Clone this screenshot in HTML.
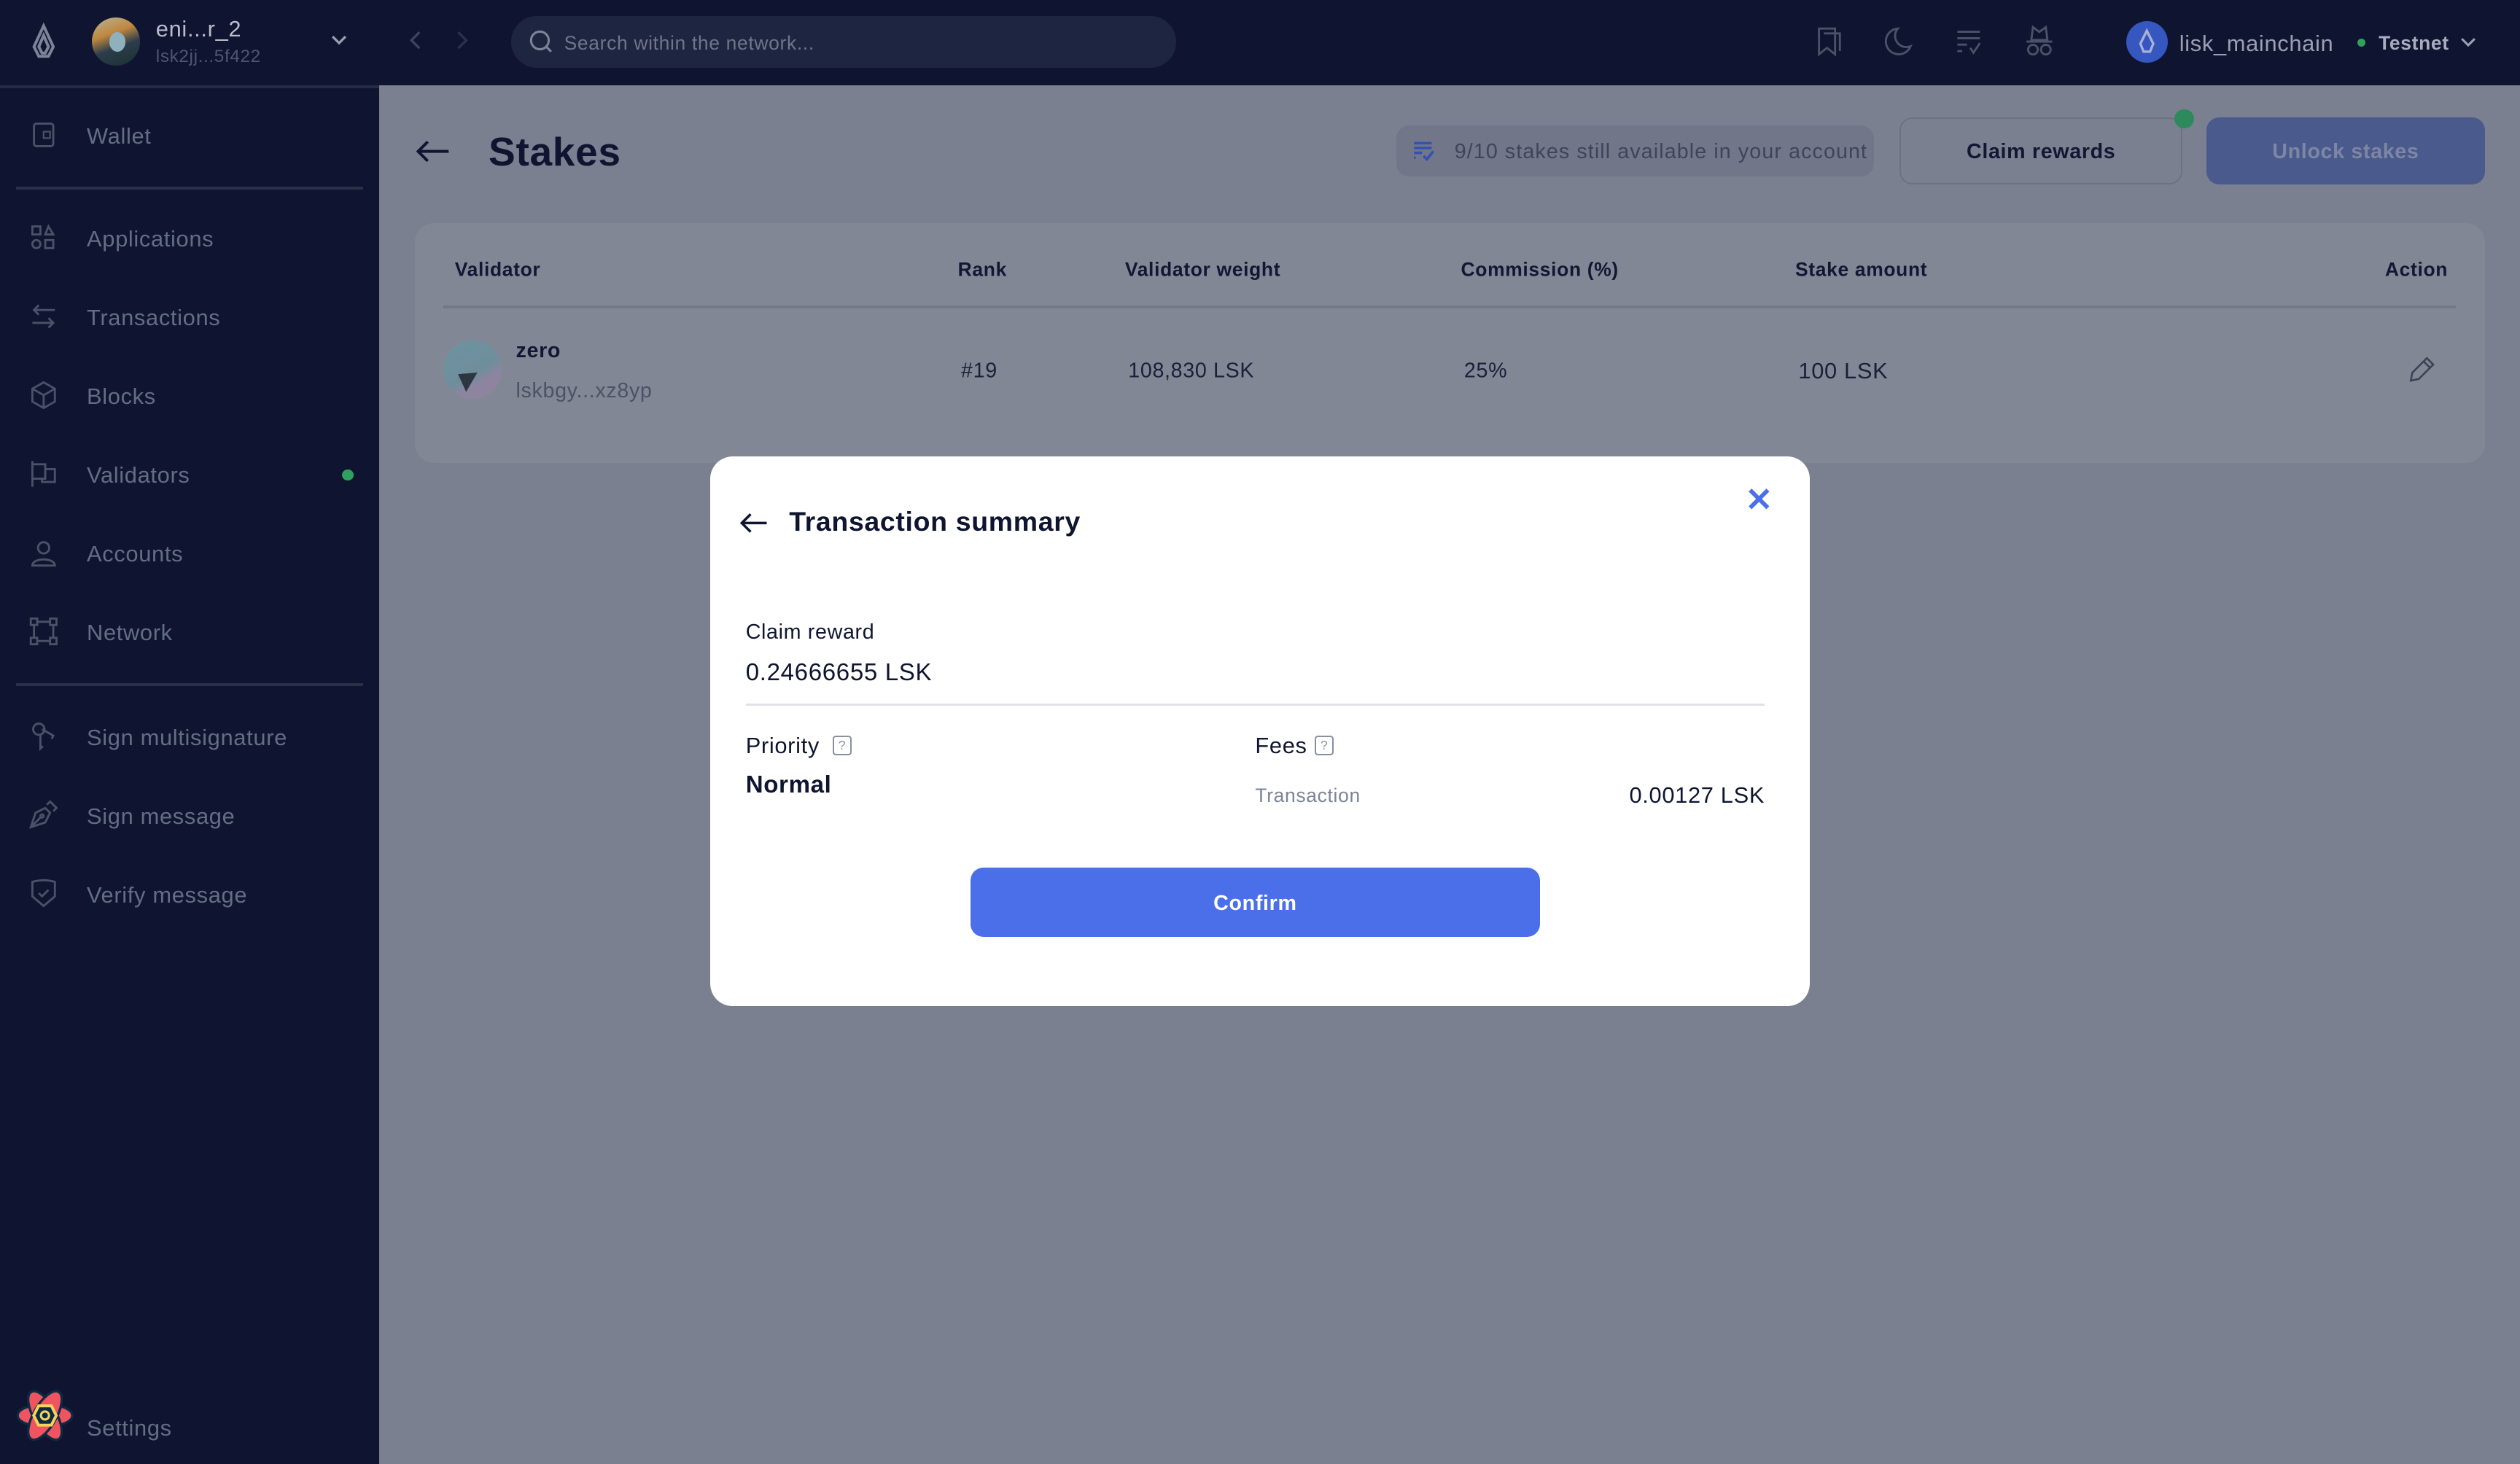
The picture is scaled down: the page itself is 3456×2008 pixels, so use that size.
<!DOCTYPE html>
<html><head><meta charset="utf-8"><style>
html{zoom:2.2041}
*{box-sizing:border-box;margin:0;padding:0}
body{width:1568px;height:911px;overflow:hidden;position:relative;background:#7a808f;font-family:"Liberation Sans",sans-serif;letter-spacing:0.3px}
.a{position:absolute}
.t{margin-top:1px}
.side{left:0;top:0;width:236px;height:911px;background:#0f1530}
.top{left:236px;top:0;width:1332px;height:53px;background:#0f1530}
.nav{position:absolute;left:54px;font-size:14px;color:#646d86;transform:translateY(-50%);white-space:nowrap;margin-top:1px}
.ic{position:absolute;left:18px;width:18px;height:18px;transform:translateY(-50%)}
.hr{position:absolute;left:10px;width:216px;height:2px;background:#2a3045}
.th{position:absolute;top:168px;transform:translateY(-50%);font-size:12px;font-weight:bold;color:#121833}
.td{position:absolute;top:231px;transform:translateY(-50%);font-size:13px;color:#1a2038}
svg{overflow:visible}
</style></head><body>
<div class="a side"></div>
<div class="a" style="left:236px;top:0;width:1px;height:53px;background:#252b44"></div>
<div class="a" style="left:0;top:53px;width:236px;height:2px;background:#252b44"></div>
<div class="a top"></div>
<svg class="a" style="left:18px;top:14px" width="18" height="24" viewBox="0 0 18 24"><path d="M9 2 L3 15 L6 21 H12 L15 15 Z M9 8 L6 15 L8 19 H10 L12 15 Z" fill="none" stroke="#7d8398" stroke-width="1.8"/></svg>
<div class="a" style="left:57px;top:11px;width:30px;height:30px;border-radius:50%;background:linear-gradient(160deg,#b8b49a 0%,#c0873e 35%,#2b3d4b 60%,#1d3030 100%)"></div>
<div class="a" style="left:68px;top:20px;width:10px;height:12px;border-radius:50%;background:#8fb0bd"></div>
<div class="a t" style="left:97px;top:9px;font-size:14px;color:#b9bdcb">eni...r_2</div>
<div class="a t" style="left:97px;top:28px;font-size:11px;color:#4e5670">lsk2jj...5f422</div>
<svg class="a" style="left:206px;top:22px" width="10" height="7"><path d="M1 1 L5 5 L9 1" fill="none" stroke="#9aa0b2" stroke-width="1.5"/></svg>
<svg class="ic" style="top:84px" viewBox="0 0 18 18"><rect x="3" y="2" width="12" height="14" rx="1.5" fill="none" stroke="#4a5168" stroke-width="1.3"/><rect x="9" y="7" width="4" height="4" fill="none" stroke="#4a5168"/></svg>
<div class="nav" style="top:84px">Wallet</div>
<div class="hr" style="top:116px"></div>
<svg class="ic" style="top:148px" viewBox="0 0 18 18"><g fill="none" stroke="#4a5168" stroke-width="1.3"><rect x="2" y="2" width="5" height="5"/><path d="M12 2 L15 7 H10 Z"/><circle cx="4.5" cy="13" r="2.5"/><rect x="10" y="10.5" width="5" height="5"/></g></svg>
<div class="nav" style="top:148px">Applications</div>
<svg class="ic" style="top:197px" viewBox="0 0 18 18"><g fill="none" stroke="#4a5168" stroke-width="1.3"><path d="M16 5 H3 M6 2 L3 5 L6 8 M2 13 H15 M12 10 L15 13 L12 16"/></g></svg>
<div class="nav" style="top:197px">Transactions</div>
<svg class="ic" style="top:246px" viewBox="0 0 18 18"><g fill="none" stroke="#4a5168" stroke-width="1.3"><path d="M9 1 L16 5 V13 L9 17 L2 13 V5 Z M2 5 L9 9 L16 5 M9 9 V17"/></g></svg>
<div class="nav" style="top:246px">Blocks</div>
<svg class="ic" style="top:295px" viewBox="0 0 18 18"><g fill="none" stroke="#4a5168" stroke-width="1.3"><path d="M2 1 V17 M2 3 H10 V12 H2 M10 6 H16 V14 H8 V12"/></g></svg>
<div class="nav" style="top:295px">Validators</div>
<div class="a" style="left:213px;top:292px;width:7px;height:7px;border-radius:50%;background:#2fa05e"></div>
<svg class="ic" style="top:344px" viewBox="0 0 18 18"><g fill="none" stroke="#4a5168" stroke-width="1.3"><circle cx="9" cy="6" r="3.5"/><path d="M2 17 C2 12 16 12 16 17 Z"/></g></svg>
<div class="nav" style="top:344px">Accounts</div>
<svg class="ic" style="top:393px" viewBox="0 0 18 18"><g fill="none" stroke="#4a5168" stroke-width="1.3"><rect x="1" y="1" width="4" height="4"/><rect x="13" y="1" width="4" height="4"/><rect x="1" y="13" width="4" height="4"/><rect x="13" y="13" width="4" height="4"/><path d="M5 3 H13 M3 5 V13 M15 5 V13 M5 15 H13"/></g></svg>
<div class="nav" style="top:393px">Network</div>
<div class="hr" style="top:425px"></div>
<svg class="ic" style="top:458px" viewBox="0 0 18 18"><g fill="none" stroke="#4a5168" stroke-width="1.3"><circle cx="6" cy="5" r="3.5"/><path d="M7 8 V17 L8.5 15.5 M8 5 L15 9 L14 11"/></g></svg>
<div class="nav" style="top:458px">Sign multisignature</div>
<svg class="ic" style="top:507px" viewBox="0 0 18 18"><g fill="none" stroke="#4a5168" stroke-width="1.3"><path d="M1 17 L4 8 L10 5 L13 8 L10 14 Z M11 3 L13 1 L17 5 L15 7 M1 17 L7 11"/><circle cx="8" cy="10" r="1"/></g></svg>
<div class="nav" style="top:507px">Sign message</div>
<svg class="ic" style="top:556px" viewBox="0 0 18 18"><g fill="none" stroke="#4a5168" stroke-width="1.3"><path d="M2 2 Q9 0 16 2 V11 L9 17 L2 11 Z M6 9 L8 11 L12 7"/></g></svg>
<div class="nav" style="top:556px">Verify message</div>
<svg class="a" style="left:10px;top:864px" width="36" height="34" viewBox="0 0 36 34"><g stroke="#0c2a45" stroke-width="1.5" fill="#ef5461"><ellipse cx="18" cy="17" rx="17" ry="7"/><ellipse cx="18" cy="17" rx="17" ry="7" transform="rotate(60 18 17)"/><ellipse cx="18" cy="17" rx="17" ry="7" transform="rotate(-60 18 17)"/></g><path d="M14 11 H22 L25 17 L22 23 H14 L11 17 Z" fill="#0c2a45" stroke="#f3d35a" stroke-width="1.8"/><circle cx="18" cy="17" r="2.5" fill="none" stroke="#f3d35a" stroke-width="1.4"/></svg>
<div class="nav" style="top:888px">Settings</div>
<svg class="a" style="left:255px;top:19px" width="8" height="12"><path d="M6 1 L1 6 L6 11" fill="none" stroke="#3d4460" stroke-width="1.5"/></svg>
<svg class="a" style="left:283px;top:19px" width="8" height="12"><path d="M2 1 L7 6 L2 11" fill="none" stroke="#2c324a" stroke-width="1.5"/></svg>
<div class="a" style="left:318px;top:10px;width:414px;height:32px;border-radius:16px;background:#1e2540"></div>
<svg class="a" style="left:329px;top:18px" width="16" height="16"><circle cx="7" cy="7" r="5.5" fill="none" stroke="#7d8398" stroke-width="1.4"/><path d="M11 11 L14 14" stroke="#7d8398" stroke-width="1.4"/></svg>
<div class="a t" style="left:351px;top:19px;font-size:12px;color:#6e758c">Search within the network...</div>
<svg class="a" style="left:1129px;top:17px" width="18" height="18" viewBox="0 0 18 18"><path d="M3 1 H13 V17 L8 13 L3 17 Z M6 4 H16 V15" fill="none" stroke="#4a5168" stroke-width="1.3"/></svg>
<svg class="a" style="left:1173px;top:17px" width="18" height="18" viewBox="0 0 18 18"><path d="M8 1 A8 8 0 1 0 16 12 A7 7 0 0 1 8 1 Z" fill="none" stroke="#4a5168" stroke-width="1.3"/></svg>
<svg class="a" style="left:1216px;top:17px" width="18" height="18" viewBox="0 0 18 18"><path d="M2 3 H16 M2 7 H16 M2 11 H8 M2 15 H5 M10 13 L12 16 L16 10" fill="none" stroke="#4a5168" stroke-width="1.3"/></svg>
<svg class="a" style="left:1260px;top:16px" width="18" height="20" viewBox="0 0 18 20"><path d="M5 1 L9 4 L13 1 L14 9 H4 Z M1 10 H17" fill="none" stroke="#4a5168" stroke-width="1.3"/><circle cx="5" cy="15" r="3" fill="none" stroke="#4a5168" stroke-width="1.3"/><circle cx="13" cy="15" r="3" fill="none" stroke="#4a5168" stroke-width="1.3"/></svg>
<div class="a" style="left:1323px;top:13px;width:26px;height:26px;border-radius:50%;background:#3656c0"></div>
<svg class="a" style="left:1330px;top:18px" width="12" height="16" viewBox="0 0 12 16"><path d="M6 1 L2 9 L4 14 H8 L10 9 Z" fill="none" stroke="#a8b3d8" stroke-width="1.5"/></svg>
<div class="a t" style="left:1356px;top:18px;font-size:14px;color:#9aa0b2">lisk_mainchain</div>
<div class="a" style="left:1467px;top:24px;width:5px;height:5px;border-radius:50%;background:#2fa05e"></div>
<div class="a t" style="left:1480px;top:19px;font-size:12px;font-weight:bold;color:#a8adbd">Testnet</div>
<svg class="a" style="left:1531px;top:23px" width="10" height="7"><path d="M1 1 L5 5 L9 1" fill="none" stroke="#9aa0b2" stroke-width="1.4"/></svg>
<svg class="a" style="left:258px;top:86px" width="22" height="16"><path d="M21 8 H2 M8 2 L2 8 L8 14" fill="none" stroke="#0f1530" stroke-width="1.8"/></svg>
<div class="a t" style="left:304px;top:79px;font-size:25px;font-weight:bold;color:#0f1530">Stakes</div>
<div class="a" style="left:869px;top:78px;width:297px;height:32px;border-radius:8px;background:#717789"></div>
<svg class="a" style="left:879px;top:87px" width="14" height="14"><path d="M1 2 H12 M1 5 H12 M1 8 H6 M1 11 H2 M7 10 L9 12 L13 7" fill="none" stroke="#3450b0" stroke-width="1.6"/></svg>
<div class="a t" style="left:905px;top:86px;font-size:13px;color:#3e4459;letter-spacing:0.5px">9/10 stakes still available in your account</div>
<div class="a" style="left:1182px;top:73px;width:176px;height:42px;border-radius:8px;border:1px solid #6c7282"></div>
<div class="a t" style="left:1182px;top:86px;width:176px;text-align:center;font-size:13px;font-weight:bold;color:#121833">Claim rewards</div>
<div class="a" style="left:1353px;top:68px;width:12px;height:12px;border-radius:50%;background:#2e8a5a"></div>
<div class="a" style="left:1373px;top:73px;width:173px;height:42px;border-radius:8px;background:#4a5a8c"></div>
<div class="a t" style="left:1373px;top:86px;width:173px;text-align:center;font-size:13px;font-weight:bold;color:#7d86a4">Unlock stakes</div>
<div class="a" style="left:258px;top:139px;width:1288px;height:149px;border-radius:12px;background:#828795"></div>
<div class="th" style="left:283px">Validator</div>
<div class="th" style="left:596px">Rank</div>
<div class="th" style="left:700px">Validator weight</div>
<div class="th" style="left:909px">Commission (%)</div>
<div class="th" style="left:1117px">Stake amount</div>
<div class="th" style="left:1484px">Action</div>
<div class="a" style="left:276px;top:190px;width:1252px;height:2px;background:#737888"></div>
<div class="a" style="left:276px;top:212px;width:36px;height:36px;border-radius:50%;background:linear-gradient(150deg,#6e93a0 0%,#6f8e9c 55%,#8e84a0 70%)"></div>
<svg class="a" style="left:284px;top:232px" width="16" height="14"><path d="M1 1 L13 0 L6 12 Z" fill="#2c3540"/></svg>
<div class="a t" style="left:321px;top:210px;font-size:13px;font-weight:bold;color:#121833">zero</div>
<div class="a t" style="left:321px;top:235px;font-size:13px;color:#4c5266">lskbgy...xz8yp</div>
<div class="td" style="left:598px">#19</div>
<div class="td" style="left:702px">108,830 LSK</div>
<div class="td" style="left:911px">25%</div>
<div class="td" style="left:1119px;font-size:14px">100 LSK</div>
<svg class="a" style="left:1499px;top:222px" width="16" height="16" viewBox="0 0 16 16"><path d="M1 15 L2 10 L11 1 L15 5 L6 14 Z M9 3 L13 7" fill="none" stroke="#3d4356" stroke-width="1.2"/></svg>
<div class="a" style="left:442px;top:284px;width:684px;height:342px;border-radius:14px;background:#fff"></div>
<svg class="a" style="left:460px;top:319px" width="18" height="13"><path d="M17 6.5 H2 M7 1 L1.5 6.5 L7 12" fill="none" stroke="#0f1530" stroke-width="1.6"/></svg>
<div class="a t" style="left:491px;top:314px;font-size:17px;font-weight:bold;color:#0f1530">Transaction summary</div>
<svg class="a" style="left:1088px;top:304px" width="13" height="13"><path d="M1 1 L12 12 M12 1 L1 12" stroke="#4a6fe8" stroke-width="2.6"/></svg>
<div class="a t" style="left:464px;top:385px;font-size:13px;color:#0f1530">Claim reward</div>
<div class="a t" style="left:464px;top:409px;font-size:15px;color:#0f1530">0.24666655 LSK</div>
<div class="a" style="left:464px;top:438px;width:634px;height:1px;background:#e0e2e8"></div>
<div class="a t" style="left:464px;top:455px;font-size:14px;color:#0f1530">Priority</div>
<div class="a" style="left:518px;top:458px;width:12px;height:12px;border:1px solid #8a90a2;border-radius:2px;font-size:8px;color:#8a90a2;text-align:center;line-height:10px">?</div>
<div class="a t" style="left:464px;top:479px;font-size:15px;font-weight:bold;color:#0f1530">Normal</div>
<div class="a t" style="left:781px;top:455px;font-size:14px;color:#0f1530">Fees</div>
<div class="a" style="left:818px;top:458px;width:12px;height:12px;border:1px solid #8a90a2;border-radius:2px;font-size:8px;color:#8a90a2;text-align:center;line-height:10px">?</div>
<div class="a t" style="left:781px;top:487px;font-size:12px;color:#7d8398">Transaction</div>
<div class="a t" style="left:900px;top:486px;width:198px;text-align:right;font-size:14px;color:#0f1530">0.00127 LSK</div>
<div class="a" style="left:604px;top:540px;width:354px;height:43px;border-radius:8px;background:#4a6fe8"></div>
<div class="a t" style="left:604px;top:554px;width:354px;text-align:center;font-size:13px;font-weight:bold;color:#fff">Confirm</div>
</body></html>
